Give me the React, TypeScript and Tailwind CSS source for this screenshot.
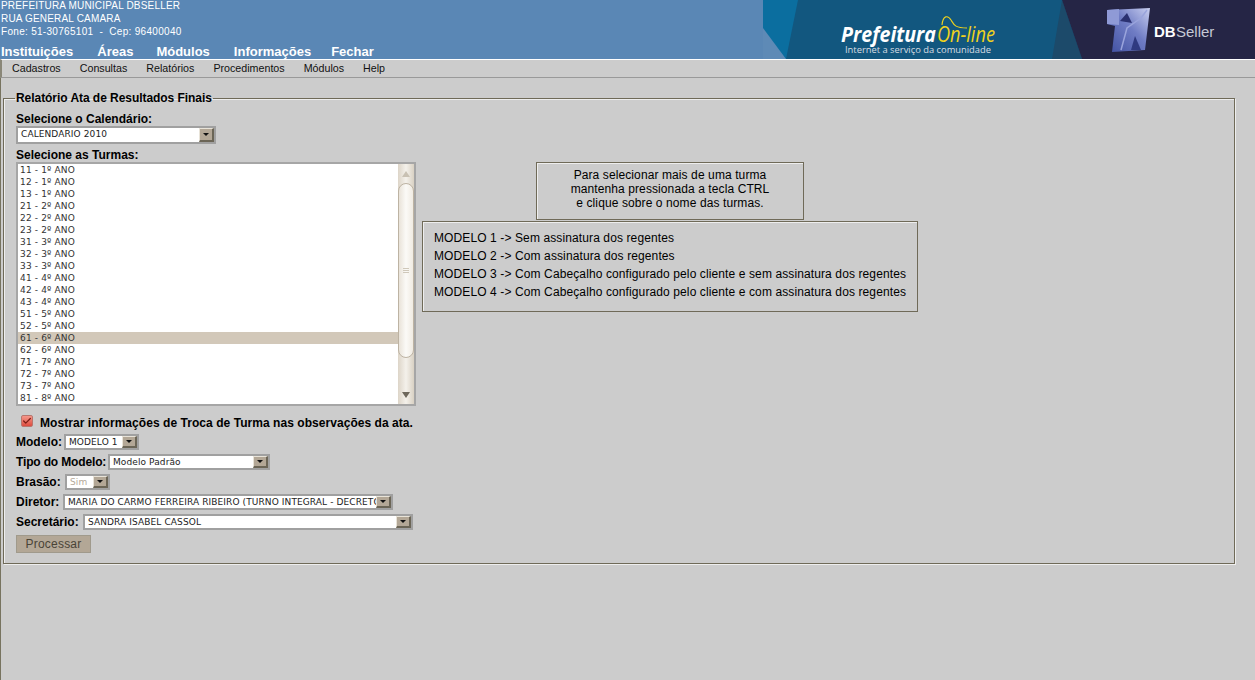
import { Check } from 'lucide-react'

const TURMAS = [
  '11 - 1º ANO', '12 - 1º ANO', '13 - 1º ANO',
  '21 - 2º ANO', '22 - 2º ANO', '23 - 2º ANO',
  '31 - 3º ANO', '32 - 3º ANO', '33 - 3º ANO',
  '41 - 4º ANO', '42 - 4º ANO', '43 - 4º ANO',
  '51 - 5º ANO', '52 - 5º ANO',
  '61 - 6º ANO', '62 - 6º ANO',
  '71 - 7º ANO', '72 - 7º ANO', '73 - 7º ANO',
  '81 - 8º ANO',
]

const TOP_MENU = [
  { label: 'Instituições', cls: 'mr-[24px]' },
  { label: 'Áreas', cls: 'mr-[23px]' },
  { label: 'Módulos', cls: 'mr-[24px]' },
  { label: 'Informações', cls: 'mr-[20px]' },
  { label: 'Fechar', cls: '' },
]

const SUB_MENU = ['Cadastros', 'Consultas', 'Relatórios', 'Procedimentos', 'Módulos', 'Help']

const MODELOS = [
  'MODELO 1 -> Sem assinatura dos regentes',
  'MODELO 2 -> Com assinatura dos regentes',
  'MODELO 3 -> Com Cabeçalho configurado pelo cliente e sem assinatura dos regentes',
  'MODELO 4 -> Com Cabeçalho configurado pelo cliente e com assinatura dos regentes',
]

function Banner() {
  return (
    <svg width="492" height="59" viewBox="0 0 492 59" className="block shrink-0">
      <defs>
        <linearGradient id="cube" x1="0" y1="1" x2="1" y2="0">
          <stop offset="0" stopColor="#3f4f9f" />
          <stop offset="0.55" stopColor="#6f7cc4" />
          <stop offset="1" stopColor="#c9cff0" />
        </linearGradient>
      </defs>
      <rect width="492" height="59" fill="#0b6e9f" />
      <polygon points="0,28 23,59 0,59" fill="#5e8ab6" />
      <polygon points="35,0 299,0 319,59 23,59" fill="#12577f" />
      <polygon points="299,0 319,59 289,59" fill="#1c4a6a" />
      <polygon points="299,0 492,0 492,59 319,59" fill="#252545" />
      <text x="78" y="42" fontFamily="'Open Sans', sans-serif" fontSize="21" fontWeight="700" fontStyle="italic" fill="#fff" textLength="95" lengthAdjust="spacingAndGlyphs">Prefeitura</text>
      <text x="174" y="42" fontFamily="'Open Sans', sans-serif" fontSize="21" fontStyle="italic" fill="#f0d21c" textLength="58" lengthAdjust="spacingAndGlyphs">On-line</text>
      <path d="M179 25C180 15 185 15 188 20S192 28 204 28" fill="none" stroke="#f0d21c" strokeWidth="1.1" />
      <text x="82" y="53" fontFamily="'Open Sans', sans-serif" fontSize="9.5" fill="#d8dde2" textLength="146" lengthAdjust="spacingAndGlyphs">Internet a serviço da comunidade</text>
      <polygon points="344,10 387,8 382,50 349,52 352,26 344,24" fill="url(#cube)" />
      <polygon points="344,10 356,9 356,25 344,24" fill="#8f9ad6" />
      <polygon points="357,21 364,13 369,23" fill="#2b3170" />
      <path d="M358 50l6-22 14-10 6-8" fill="none" stroke="#9aa4dc" strokeWidth="1.5" />
      <path d="M368 50l4-14 6 14z" fill="#2f3a80" />
      <text x="391" y="37" fontFamily="'Liberation Sans', sans-serif" fontSize="15" fontWeight="700" fill="#fff">DB</text>
      <text x="413" y="37" fontFamily="'Liberation Sans', sans-serif" fontSize="15" fill="#c6c9d6">Seller</text>
    </svg>
  )
}

function FakeSelect({ width, text, disabled, tall }: { width: string; text: string; disabled?: boolean; tall?: boolean }) {
  return (
    <div className={`${width} ${tall ? 'h-[18px]' : 'h-[16px]'} shrink-0 flex bg-white border-2 border-[#a0a0a0] overflow-hidden`}>
      <span className={`flex-1 min-w-0 overflow-hidden whitespace-nowrap pl-[3px] text-[9px] ${tall ? 'leading-[13px]' : 'leading-[12px]'} tracking-[0.1px] font-['DejaVu_Sans',sans-serif] ${disabled ? 'text-[#b5a999]' : 'text-[#222]'}`}>
        {text}
      </span>
      <span className="w-[15px] shrink-0 flex items-center justify-center bg-[#b3a796] border-t border-l border-t-[#e8e3d8] border-l-[#e8e3d8] border-r-2 border-b-2 border-r-[#6b6556] border-b-[#6b6556]">
        <span className="block w-0 h-0 border-x-[3px] border-x-transparent border-t-[3px] border-t-[#111]" />
      </span>
    </div>
  )
}

function ListBox() {
  return (
    <div className="w-[400px] h-[244px] flex bg-white border-2 border-[#a6a6a6] overflow-hidden">
      <div className="flex-1 min-w-0">
        {TURMAS.map((t) => (
          <div
            key={t}
            className={`h-[12px] pl-[2px] text-[9px] leading-[12px] tracking-[0.15px] text-[#333] font-['DejaVu_Sans',sans-serif] ${t.startsWith('61') ? 'bg-[#d2c8b9]' : ''}`}
          >
            {t}
          </div>
        ))}
      </div>
      <div className="w-[16px] shrink-0 flex flex-col items-center bg-gradient-to-r from-[#ddd5c8] via-[#f4f1eb] to-[#d9d1c3]">
        <div className="h-[19px] w-full flex items-center justify-center pt-[1px]">
          <span className="block w-0 h-0 border-x-[4px] border-x-transparent border-b-[6px] border-b-[#c9c1b3]" />
        </div>
        <div className="w-full h-[175px] flex flex-col items-center justify-center gap-[1px] rounded-[8px] border border-[#bdb3a3] bg-gradient-to-r from-[#e9e3d9] via-[#fbfaf7] to-[#f0ebe2]">
          <span className="block w-[6px] h-px bg-[#cfc8ba]" />
          <span className="block w-[6px] h-px bg-[#cfc8ba]" />
          <span className="block w-[6px] h-px bg-[#cfc8ba]" />
        </div>
        <div className="flex-1 w-full flex items-end justify-center pb-[6px]">
          <span className="block w-0 h-0 border-x-[4px] border-x-transparent border-t-[6px] border-t-[#6e685c]" />
        </div>
      </div>
    </div>
  )
}

function FormRow({ label, labelWidth, tight, children }: { label: string; labelWidth: string; tight?: boolean; children: React.ReactNode }) {
  return (
    <div className="h-[20px] flex items-center">
      <span className={`${labelWidth} text-[12px] font-bold text-black whitespace-nowrap ${tight ? 'tracking-[-0.15px]' : ''}`}>{label}</span>
      {children}
    </div>
  )
}

export default function App() {
  return (
    <div className="w-[1255px] h-[680px] overflow-hidden bg-[#cccccc] font-['Liberation_Sans',Arial,sans-serif]">
      <header className="h-[59px] flex justify-between bg-[#5a87b5]">
        <div className="text-white">
          <div className="-mt-[1px] pl-[1px] text-[10px] leading-[13px] tracking-[0.18px]">
            <div>PREFEITURA MUNICIPAL DBSELLER</div>
            <div>RUA GENERAL CAMARA</div>
            <div className="whitespace-pre tracking-[0.3px]">Fone: 51-30765101  -  Cep: 96400040</div>
          </div>
          <nav className="mt-[7px] pl-[1px] flex text-[13px] leading-[14px] font-bold">
            {TOP_MENU.map((m) => (
              <span key={m.label} className={m.cls}>{m.label}</span>
            ))}
          </nav>
        </div>
        <Banner />
      </header>

      <div className="h-[19px] flex items-center gap-[19px] pl-[10px] pb-[1px] bg-[#cccccc] border-t border-t-white border-b border-b-[#999] border-l-2 border-l-[#8a8778]">
        {SUB_MENU.map((m) => (
          <span key={m} className="text-[10.7px] text-[#111]">{m}</span>
        ))}
      </div>

      <main className="h-[602px] border-l border-l-[#77735f] pt-[13px] pl-[2px]">
        <fieldset className="w-[1232px] h-[473px] border border-[#6f6a58] shadow-[inset_1px_1px_0_#eee,1px_1px_0_#eee] pl-[12px] m-0">
          <legend className="-ml-[1px] px-[1px] text-[12px] leading-[14px] font-bold tracking-[-0.05px] text-black">
            Relatório Ata de Resultados Finais
          </legend>

          <div className="pt-[7px] text-[12px] leading-[14px] font-bold text-black">Selecione o Calendário:</div>
          <FakeSelect tall width="w-[200px]" text="CALENDARIO 2010" />
          <div className="mt-[4px] text-[12px] leading-[14px] font-bold text-black">Selecione as Turmas:</div>

          <div className="flex gap-[6px]">
            <ListBox />
            <div className="flex flex-col gap-px">
              <div className="ml-[114px] w-[268px] h-[58px] border border-[#6f6a58] flex flex-col items-center pt-[5px] text-[12px] leading-[14px] tracking-[0.1px] text-black shadow-[inset_1px_1px_0_#eee]">
                <span>Para selecionar mais de uma turma</span>
                <span>mantenha pressionada a tecla CTRL</span>
                <span>e clique sobre o nome das turmas.</span>
              </div>
              <div className="w-[496px] h-[91px] border border-[#6f6a58] pl-[11px] pt-[7px] text-[12px] leading-[18px] tracking-[0.11px] text-black shadow-[inset_1px_1px_0_#eee]">
                {MODELOS.map((m) => (
                  <div key={m}>{m}</div>
                ))}
              </div>
            </div>
          </div>

          <div className="mt-[8px] h-[18px] flex items-center pl-[5px] gap-[7px]">
            <span className="w-[12px] h-[12px] mb-[4px] flex items-center justify-center rounded-[2px] bg-gradient-to-b from-[#f4968a] to-[#dd4a3e] border border-[#b8766e]">
              <Check size={10} strokeWidth={3} className="text-[#7a1c14]" />
            </span>
            <span className="text-[12px] font-bold tracking-[0.05px] text-black">Mostrar informações de Troca de Turma nas observações da ata.</span>
          </div>

          <FormRow label="Modelo:" labelWidth="w-[48px]"><FakeSelect width="w-[75px]" text="MODELO 1" /></FormRow>
          <FormRow label="Tipo do Modelo:" labelWidth="w-[92px]" tight><FakeSelect width="w-[162px]" text="Modelo Padrão" /></FormRow>
          <FormRow label="Brasão:" labelWidth="w-[49px]"><FakeSelect width="w-[45px]" text="Sim" disabled /></FormRow>
          <FormRow label="Diretor:" labelWidth="w-[47px]"><FakeSelect width="w-[330px]" text="MARIA DO CARMO FERREIRA RIBEIRO (TURNO INTEGRAL - DECRETO" /></FormRow>
          <FormRow label="Secretário:" labelWidth="w-[67px]"><FakeSelect width="w-[330px]" text="SANDRA ISABEL CASSOL" /></FormRow>

          <button type="button" className="mt-[3px] block w-[75px] h-[18px] bg-[#b3a796] border border-[#a09a8c] text-[12px] leading-[16px] text-[#4a4436] tracking-[0.2px]">
            Processar
          </button>
        </fieldset>
      </main>
    </div>
  )
}
